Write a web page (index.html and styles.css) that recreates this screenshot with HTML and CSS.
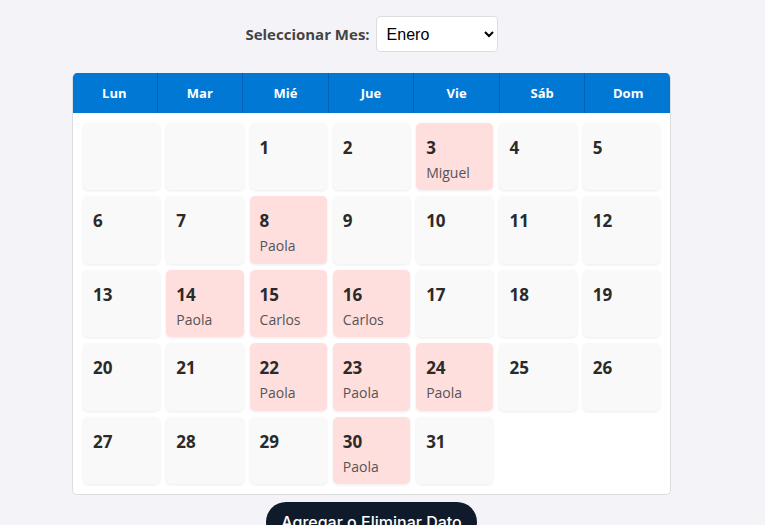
FILE: index.html
```html
<!DOCTYPE html>
<html lang="es">
<head>
<meta charset="utf-8">
<title>Calendario</title>
<link rel="stylesheet" href="styles.css">
</head>
<body>
<div class="page">
  <div class="controls">
    <label class="label" for="mes">Seleccionar Mes:</label>
    <select id="mes" class="select">
      <option>Enero</option>
    </select>
  </div>
  <div class="calendar">
    <div class="head">
      <div class="hcell">Lun</div>
      <div class="hcell">Mar</div>
      <div class="hcell">Mié</div>
      <div class="hcell">Jue</div>
      <div class="hcell">Vie</div>
      <div class="hcell">Sáb</div>
      <div class="hcell">Dom</div>
    </div>
    <div class="grid">
      <div class="day"></div>
      <div class="day"></div>
      <div class="day"><span class="num">1</span></div>
      <div class="day"><span class="num">2</span></div>
      <div class="day busy"><span class="num">3</span><span class="name">Miguel</span></div>
      <div class="day"><span class="num">4</span></div>
      <div class="day"><span class="num">5</span></div>

      <div class="day"><span class="num">6</span></div>
      <div class="day"><span class="num">7</span></div>
      <div class="day busy"><span class="num">8</span><span class="name">Paola</span></div>
      <div class="day"><span class="num">9</span></div>
      <div class="day"><span class="num">10</span></div>
      <div class="day"><span class="num">11</span></div>
      <div class="day"><span class="num">12</span></div>

      <div class="day"><span class="num">13</span></div>
      <div class="day busy"><span class="num">14</span><span class="name">Paola</span></div>
      <div class="day busy"><span class="num">15</span><span class="name">Carlos</span></div>
      <div class="day busy"><span class="num">16</span><span class="name">Carlos</span></div>
      <div class="day"><span class="num">17</span></div>
      <div class="day"><span class="num">18</span></div>
      <div class="day"><span class="num">19</span></div>

      <div class="day"><span class="num">20</span></div>
      <div class="day"><span class="num">21</span></div>
      <div class="day busy"><span class="num">22</span><span class="name">Paola</span></div>
      <div class="day busy"><span class="num">23</span><span class="name">Paola</span></div>
      <div class="day busy"><span class="num">24</span><span class="name">Paola</span></div>
      <div class="day"><span class="num">25</span></div>
      <div class="day"><span class="num">26</span></div>

      <div class="day"><span class="num">27</span></div>
      <div class="day"><span class="num">28</span></div>
      <div class="day"><span class="num">29</span></div>
      <div class="day busy"><span class="num">30</span><span class="name">Paola</span></div>
      <div class="day"><span class="num">31</span></div>
    </div>
  </div>
  <button class="btn">Agregar o Eliminar Dato</button>
</div>
</body>
</html>
```
FILE: styles.css
```css
html, body {
  margin: 0;
  padding: 0;
  background: #f4f4f8;
  overflow: hidden;
  height: 525px;
}
.page {
  width: 743px;
  display: flex;
  flex-direction: column;
  align-items: center;
  padding-top: 16px;
  font-family: "Open Sans", "Noto Sans", sans-serif;
}
.controls {
  display: flex;
  align-items: center;
  gap: 6px;
  height: 36px;
}
.label {
  font-weight: 700;
  font-size: 15px;
  color: #444;
}
.select {
  width: 122px;
  height: 36px;
  border: 1px solid #ddd;
  border-radius: 4px;
  background: #fff;
  font-family: "Liberation Sans", Arial, sans-serif;
  font-size: 16px;
  color: #000;
  padding: 0 6px;
}
.calendar {
  margin-top: 21px;
  width: 599px;
  background: #fff;
  border: 1px solid #ddd;
  border-top: none;
  border-radius: 5px;
  overflow: hidden;
  box-sizing: border-box;
}
.head {
  display: grid;
  grid-template-columns: repeat(7, 1fr);
  background: #0078d4;
  height: 40px;
  margin: 0 -1px;
}
.hcell {
  display: flex;
  align-items: center;
  justify-content: center;
  color: #fff;
  font-weight: 700;
  font-size: 13px;
  border-right: 1px solid #0062b0;
}
.hcell:last-child {
  border-right: none;
}
.grid {
  display: grid;
  grid-template-columns: repeat(7, 1fr);
  grid-auto-rows: 67.4px;
  gap: 6px;
  padding: 10px;
}
.day {
  background: #f9f9f9;
  border-radius: 5px;
  box-shadow: 0 1px 3px rgba(0, 0, 0, 0.08);
  padding: 13px 10px 0;
  display: flex;
  flex-direction: column;
  color: #333;
}
.day.busy {
  background: #ffdede;
}
.num {
  font-size: 17px;
  font-weight: 700;
  line-height: 24px;
  color: #2a2a2a;
}
.name {
  font-size: 14px;
  line-height: 19px;
  margin-top: 3px;
  color: #555;
}
.btn {
  margin-top: 7px;
  width: 211px;
  height: 40px;
  border: none;
  border-radius: 20px;
  background: #0f1b2a;
  color: #fff;
  font-family: "Inter", "Roboto", sans-serif;
  font-size: 16px;
  font-weight: 500;
  padding: 0;
  align-self: center;
}
```
